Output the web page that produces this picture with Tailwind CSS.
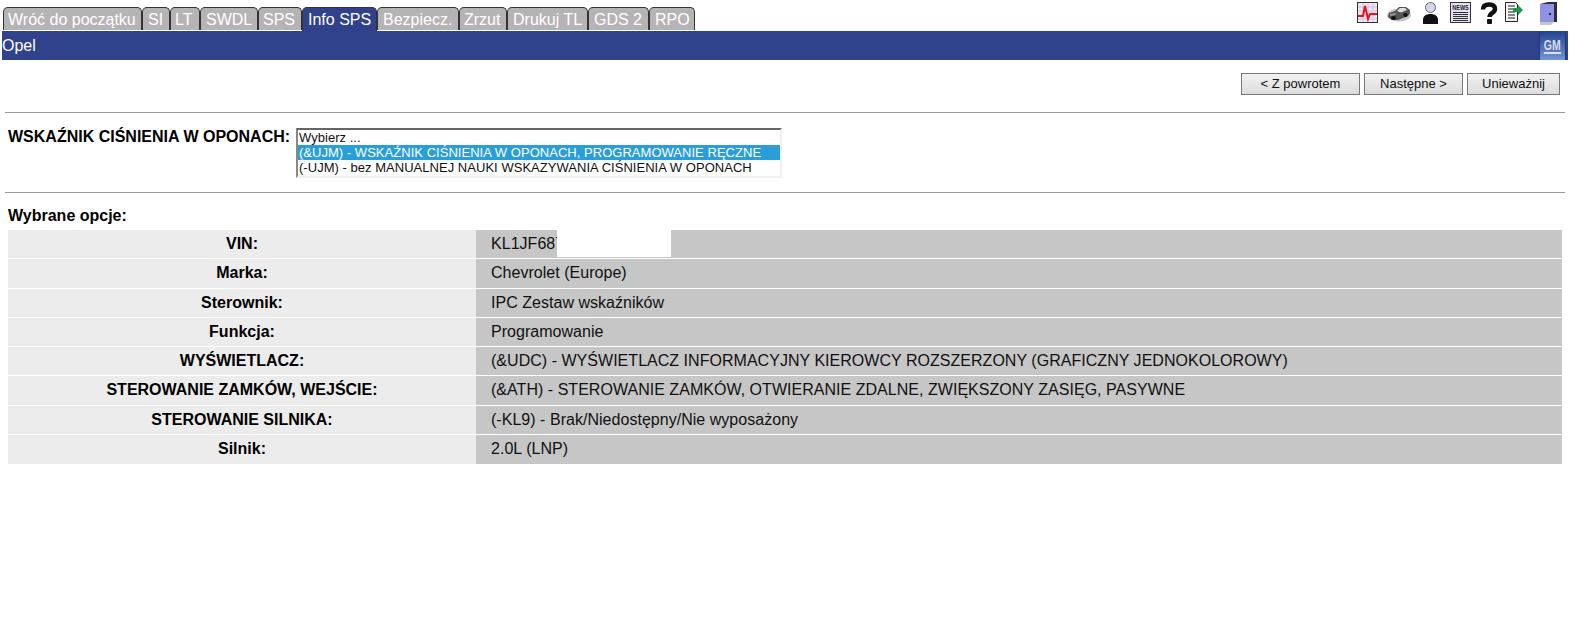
<!DOCTYPE html>
<html lang="pl">
  <head>
    <meta charset="UTF-8" />
    <meta name="viewport" content="width=device-width,initial-scale=1.0" />
    <title>SPS</title>
    <script src="https://cdn.jsdelivr.net/npm/@tailwindcss/browser@4"></script>
  </head>
  <body class="h-[633px] overflow-hidden bg-white font-['Liberation_Sans',Arial,sans-serif] text-black">
    <!-- Tabs and toolbar -->
    <div class="flex justify-between h-[31px] pl-[3px] pr-[13px]">
      <div class="flex items-start pt-[7px] text-[16px] leading-[24px] text-white">
        <a class="w-[139px] h-[23px] pl-[4px] bg-[#b4b4b4] border border-b-0 border-[#333] rounded-t-[5px]">Wróć do początku</a>
        <a class="w-[28px] h-[23px] pl-[5px] bg-[#b4b4b4] border border-b-0 border-[#333] rounded-t-[5px]">SI</a>
        <a class="w-[30px] h-[23px] pl-[4px] bg-[#b4b4b4] border border-b-0 border-[#333] rounded-t-[5px]">LT</a>
        <a class="w-[58px] h-[23px] pl-[5px] bg-[#b4b4b4] border border-b-0 border-[#333] rounded-t-[5px]">SWDL</a>
        <a class="w-[44px] h-[23px] pl-[4px] bg-[#b4b4b4] border border-b-0 border-[#333] rounded-t-[5px]">SPS</a>
        <a class="w-[75px] h-[24px] pl-[5px] bg-[#31428c] border border-b-0 border-[#333] rounded-t-[5px]">Info SPS</a>
        <a class="w-[82px] h-[23px] pl-[5px] bg-[#b4b4b4] border border-b-0 border-[#333] rounded-t-[5px]">Bezpiecz.</a>
        <a class="w-[48px] h-[23px] pl-[4px] bg-[#b4b4b4] border border-b-0 border-[#333] rounded-t-[5px]">Zrzut</a>
        <a class="w-[81px] h-[23px] pl-[5px] bg-[#b4b4b4] border border-b-0 border-[#333] rounded-t-[5px]">Drukuj TL</a>
        <a class="w-[61px] h-[23px] pl-[5px] bg-[#b4b4b4] border border-b-0 border-[#333] rounded-t-[5px]">GDS 2</a>
        <a class="w-[46px] h-[23px] pl-[5px] bg-[#b4b4b4] border border-b-0 border-[#333] rounded-t-[5px]">RPO</a>
      </div>
      <div class="flex items-start pt-[2px]">
        <!-- Diagnostic chart -->
        <svg class="w-[21px] h-[21px]" viewBox="0 0 21 21">
          <rect x="0.500" y="0.500" width="20" height="20" fill="#f2e6ee" stroke="#333" />
          <path d="M1 5h19M1 9h19M1 13h19M1 17h19M6 1v19M11 1v19M16 1v19" stroke="#c9c3e6" />
          <path d="M1 14h5l2-10 3 13 2-5h7" fill="none" stroke="#e0141c" stroke-width="2" />
        </svg>
        <!-- Car -->
        <svg class="w-[24px] h-[17px] ml-[9px] mt-[3px]" viewBox="0 0 24 17">
          <ellipse cx="12" cy="10" rx="12" ry="6.500" fill="#c4c4c4" />
          <path d="M1 12 2 8 8 6 12 2h7l4 3v3l-2 3-10 4H5z" fill="#555" />
          <path d="M10 6l3-3h5l2 2-6 2.500z" fill="#ddd" />
          <path d="M3 9l6-1-1 2-5 1z" fill="#999" />
          <ellipse cx="6.500" cy="13" rx="2.500" ry="2" fill="#111" />
          <ellipse cx="18.500" cy="10" rx="2.200" ry="2" fill="#111" />
        </svg>
        <!-- User -->
        <svg class="w-[15px] h-[22px] ml-[12px]" viewBox="0 0 15 22">
          <circle cx="7.500" cy="5.500" r="5" fill="#d5d5f0" stroke="#666" />
          <path d="M0 22v-4c0-4 3-6 7.500-6s7.500 2 7.500 6v4z" fill="#111" />
        </svg>
        <!-- News -->
        <svg class="w-[21px] h-[21px] ml-[12px]" viewBox="0 0 21 21">
          <rect x="0.500" y="0.500" width="20" height="20" fill="#e4e0f2" stroke="#333" />
          <text transform="translate(10.500 8) scale(1 1.300)" text-anchor="middle" font-size="5.500" font-weight="bold" fill="#222">NEWS</text>
          <path d="M3 10.500h15M3 12.500h15M3 14.500h15M3 16.500h15M3 18.500h15" stroke="#333" />
        </svg>
        <!-- Help -->
        <svg class="w-[18px] h-[22px] ml-[9px]" viewBox="0 0 18 22">
          <path d="M3 7.500C3 4 5.500 2.500 9 2.500s6 1.500 6 4.500c0 4-5.500 4-5.500 8" fill="none" stroke="#111" stroke-width="4.500" />
          <rect x="7" y="17" width="5" height="5" rx="1" fill="#111" />
        </svg>
        <!-- Export -->
        <svg class="w-[18px] h-[20px] ml-[7px]" viewBox="0 0 18 20">
          <path d="M.5.5h10l2 2v17H.5z" fill="#f4f4f4" stroke="#222" />
          <path d="M3 4h7M3 7h7M3 10h7M3 13h7M3 16h7" stroke="#222" />
          <path d="M8 6h5V3l5 5-5 5v-3H8z" fill="#1c9a4c" />
        </svg>
        <!-- Exit door -->
        <svg class="w-[17px] h-[23px] ml-[17px]" viewBox="0 0 17 23">
          <path d="M0 2h14v18H0z" fill="#8f91e4" />
          <path d="M0 2 8 0h9v20h-3V2z" fill="#2c2c3c" />
          <path d="M0 20h14l-3 3H0z" fill="#c6c6c6" />
          <rect x="9" y="11" width="2" height="2" fill="#222" />
        </svg>
      </div>
    </div>

    <!-- Title bar -->
    <div class="flex justify-between items-center h-[29px] mx-[2px] bg-[#31428c] text-[16px] text-white">
      <span>Opel</span>
      <div class="flex items-center justify-center w-[27px] h-[29px] mr-[2px] border-x border-[#26356f] bg-gradient-to-b from-[#24428f] to-[#6f96d8]">
        <span class="scale-x-75 border-b-2 border-[#dde] text-[14px] leading-[14px] font-bold text-[#dde]">GM</span>
      </div>
    </div>

    <!-- Action buttons -->
    <div class="flex justify-end gap-[4px] pt-[13px] pr-[10px] text-[13px] text-[#111]">
      <button class="w-[119px] h-[22px] bg-gradient-to-b from-[#f2f2f2] to-[#dcdcdc] border border-[#777]">&lt; Z powrotem</button>
      <button class="w-[99px] h-[22px] bg-gradient-to-b from-[#f2f2f2] to-[#dcdcdc] border border-[#777]">Następne &gt;</button>
      <button class="w-[93px] h-[22px] bg-gradient-to-b from-[#f2f2f2] to-[#dcdcdc] border border-[#777]">Unieważnij</button>
    </div>

    <hr class="mt-[17px] mx-[5px] border-t border-[#999]" />

    <!-- Option picker -->
    <div class="flex h-[79px] pt-[15px] pl-[8px]">
      <label class="w-[288px] text-[16px] leading-[18px] font-bold whitespace-nowrap">WSKAŹNIK CIŚNIENIA W OPONACH:</label>
      <div class="w-[486px] h-[50px] border-2 border-[#f0f0f0] border-t-[#666] border-l-[#888] text-[13px] leading-[15px] tracking-[0.03px] text-[#111]">
        <div class="pl-px">Wybierz ...</div>
        <div class="pl-px bg-[#2a9ed8] text-white">(&amp;UJM) - WSKAŹNIK CIŚNIENIA W OPONACH, PROGRAMOWANIE RĘCZNE</div>
        <div class="pl-px">(-UJM) - bez MANUALNEJ NAUKI WSKAZYWANIA CIŚNIENIA W OPONACH</div>
      </div>
    </div>

    <hr class="mx-[5px] border-t border-[#999]" />

    <!-- Selected options -->
    <div class="pt-[14px] pl-[8px] text-[16px] leading-[18px] font-bold">Wybrane opcje:</div>

    <div class="relative grid grid-cols-[468px_1086px] auto-rows-[29.300px] mt-[5px] ml-[8px] w-[1554px] text-[16px] leading-[28.500px] tracking-[0.03px] text-[#111]">
      <div class="bg-[#ececec] border-b border-white text-center font-bold tracking-normal text-black">VIN:</div>
      <div class="bg-[#c6c6c6] border-b border-white pl-[15px]">KL1JF687</div>
      <div class="bg-[#ececec] border-b border-white text-center font-bold tracking-normal text-black">Marka:</div>
      <div class="bg-[#c6c6c6] border-b border-white pl-[15px]">Chevrolet (Europe)</div>
      <div class="bg-[#ececec] border-b border-white text-center font-bold tracking-normal text-black">Sterownik:</div>
      <div class="bg-[#c6c6c6] border-b border-white pl-[15px]">IPC Zestaw wskaźników</div>
      <div class="bg-[#ececec] border-b border-white text-center font-bold tracking-normal text-black">Funkcja:</div>
      <div class="bg-[#c6c6c6] border-b border-white pl-[15px]">Programowanie</div>
      <div class="bg-[#ececec] border-b border-white text-center font-bold tracking-normal text-black">WYŚWIETLACZ:</div>
      <div class="bg-[#c6c6c6] border-b border-white pl-[15px]">(&amp;UDC) - WYŚWIETLACZ INFORMACYJNY KIEROWCY ROZSZERZONY (GRAFICZNY JEDNOKOLOROWY)</div>
      <div class="bg-[#ececec] border-b border-white text-center font-bold tracking-normal text-black">STEROWANIE ZAMKÓW, WEJŚCIE:</div>
      <div class="bg-[#c6c6c6] border-b border-white pl-[15px]">(&amp;ATH) - STEROWANIE ZAMKÓW, OTWIERANIE ZDALNE, ZWIĘKSZONY ZASIĘG, PASYWNE</div>
      <div class="bg-[#ececec] border-b border-white text-center font-bold tracking-normal text-black">STEROWANIE SILNIKA:</div>
      <div class="bg-[#c6c6c6] border-b border-white pl-[15px]">(-KL9) - Brak/Niedostępny/Nie wyposażony</div>
      <div class="bg-[#ececec] text-center font-bold tracking-normal text-black">Silnik:</div>
      <div class="bg-[#c6c6c6] pl-[15px]">2.0L (LNP)</div>
      <!-- Redacted part of the VIN -->
      <div class="absolute left-[549px] top-0 w-[114px] h-[27px] bg-white"></div>
    </div>
  </body>
</html>
